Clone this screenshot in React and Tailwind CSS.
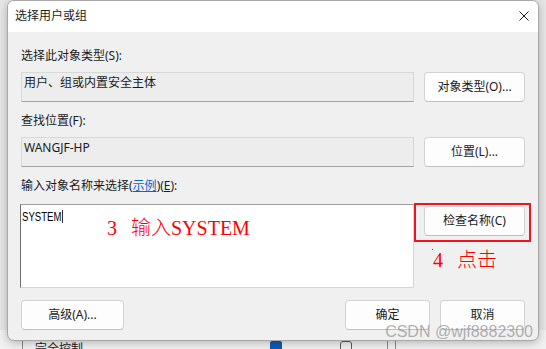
import React from "react";

const UI_FONT = "font-['Noto_Sans','Noto_Sans_CJK_SC',sans-serif]";
const NOTE_FONT = "font-['Liberation_Serif','Noto_Sans_CJK_SC',serif]";

const Btn = ({ children, className = "" }) => (
  <button
    className={`h-[30px] shrink-0 rounded-[4px] border border-[#d3d3d3] border-b-[#bfbfbf] bg-[#fdfdfd] text-[12px] leading-4 text-[#1b1b1b] ${className}`}
  >
    {children}
  </button>
);

const Field = ({ children }) => (
  <div className="h-[30px] flex-1 border border-[#d8d8d8] border-b-[#a3a3a3] bg-[#ededed] pl-[2px] pt-[2px] text-[12px] leading-4 text-[#1b1b1b]">
    {children}
  </div>
);

const CloseIcon = () => (
  <svg width="10" height="10" viewBox="0 0 10 10" fill="none">
    <path d="M0.5 0.5L9.5 9.5M9.5 0.5L0.5 9.5" stroke="#1c1c1c" strokeWidth="1" />
  </svg>
);

export default function App() {
  return (
    <div className={`relative h-[349px] w-[546px] overflow-hidden bg-[#e6e6e6] ${UI_FONT}`}>
      {/* window underneath the dialog */}
      <div className="absolute left-0 top-[330px] flex h-[30px] w-full items-start bg-[#f1f1f1] pt-[10px] text-[12px] leading-4 text-[#1b1b1b]">
        <div className="ml-[22px] h-[30px] w-px bg-[#8a8a8a]" />
        <span className="ml-[12px] mt-[1px]">完全控制</span>
        <div className="ml-[187px] mt-[1px] h-[12px] w-[12px] rounded-[2px] bg-[#0f5bb3]" />
        <div className="ml-[58px] mt-[1px] h-[12px] w-[12px] rounded-[3px] border border-[#5c5c5c]" />
        <div className="ml-[35px] h-[30px] w-px bg-[#8a8a8a]" />
        <div className="ml-[7px] h-[30px] w-px bg-[#8a8a8a]" />
      </div>

      {/* dialog */}
      <div className="absolute left-[7px] top-0 z-10 flex h-[341px] w-[532px] flex-col overflow-hidden rounded-[7px] border border-[#a8a8a8] bg-[#f0f0f0] shadow-[0_2px_8px_rgba(0,0,0,0.25)]">
        <div className="flex h-[31px] shrink-0 items-center justify-between bg-white pl-[7px] pr-[9px] text-[12px] leading-4 text-[#1b1b1b]">
          <span className="-mt-[1px]">选择用户或组</span>
          <span className="-mt-[2px]">
            <CloseIcon />
          </span>
        </div>

        <div className="flex flex-col px-[13px] pt-[16px] text-[12px] leading-4 text-[#1b1b1b]">
          <div>选择此对象类型(S):</div>
          <div className="mt-[8px] flex gap-[10px]">
            <Field>用户、组或内置安全主体</Field>
            <Btn className="w-[101px]">对象类型(O)...</Btn>
          </div>

          <div className="mt-[11px]">查找位置(F):</div>
          <div className="mt-[8px] flex gap-[10px]">
            <Field>WANGJF-HP</Field>
            <Btn className="w-[101px]">位置(L)...</Btn>
          </div>

          <div className="mt-[11px]">
            输入对象名称来选择(<span className="text-[#0a64c8] underline">示例</span>)(<span className="underline">E</span>):
          </div>
          <div className="mt-[10px] flex items-start gap-[10px]">
            <div className="-ml-px h-[84px] flex-1 border border-[#d6d6d6] border-l-[#6f6f6f] border-t-[#9c9c9c] bg-white pl-[1px] pt-[3px]">
              <span className="inline-block origin-left scale-x-[0.8] font-['Liberation_Sans',sans-serif] text-[12px] leading-4 text-black">
                SYSTEM<span className="ml-px inline-block h-[13px] w-px translate-y-[2px] bg-black" />
              </span>
            </div>
            <Btn className="mt-[2px] w-[101px]">检查名称(C)</Btn>
          </div>

          <div className="mt-[12px] flex items-center">
            <Btn className="w-[103px]">高级(A)...</Btn>
            <div className="flex-1" />
            <Btn className="w-[85px] border-[#1f6fc5] border-b-[#1f6fc5]">确定</Btn>
            <Btn className="ml-[10px] w-[85px]">取消</Btn>
          </div>
        </div>
      </div>

      {/* annotations */}
      <div className={`absolute left-[107px] top-[216px] z-20 text-[20px] leading-6 text-[#ff0000] ${NOTE_FONT} font-light`}>
        <span>3</span>
        <span className="ml-[14px]">输入SYSTEM</span>
      </div>
      <div className="absolute left-[414px] top-[203px] z-20 h-[39px] w-[117px] border-2 border-[#f0141e]" />
      <div className="absolute left-[432px] top-[249px] z-20 h-px w-px bg-[#ff0000]" />
      <div className={`absolute left-[433px] top-[248px] z-20 text-[20px] leading-6 text-[#ff0000] ${NOTE_FONT} font-light`}>
        <span>4</span>
        <span className="ml-[14px]">点击</span>
      </div>

      {/* watermark */}
      <div className="absolute right-[13px] top-[322px] z-20 font-['Liberation_Sans',sans-serif] text-[16px] leading-5 text-[#8f8f8f]/70">
        CSDN @wjf8882300
      </div>
    </div>
  );
}
